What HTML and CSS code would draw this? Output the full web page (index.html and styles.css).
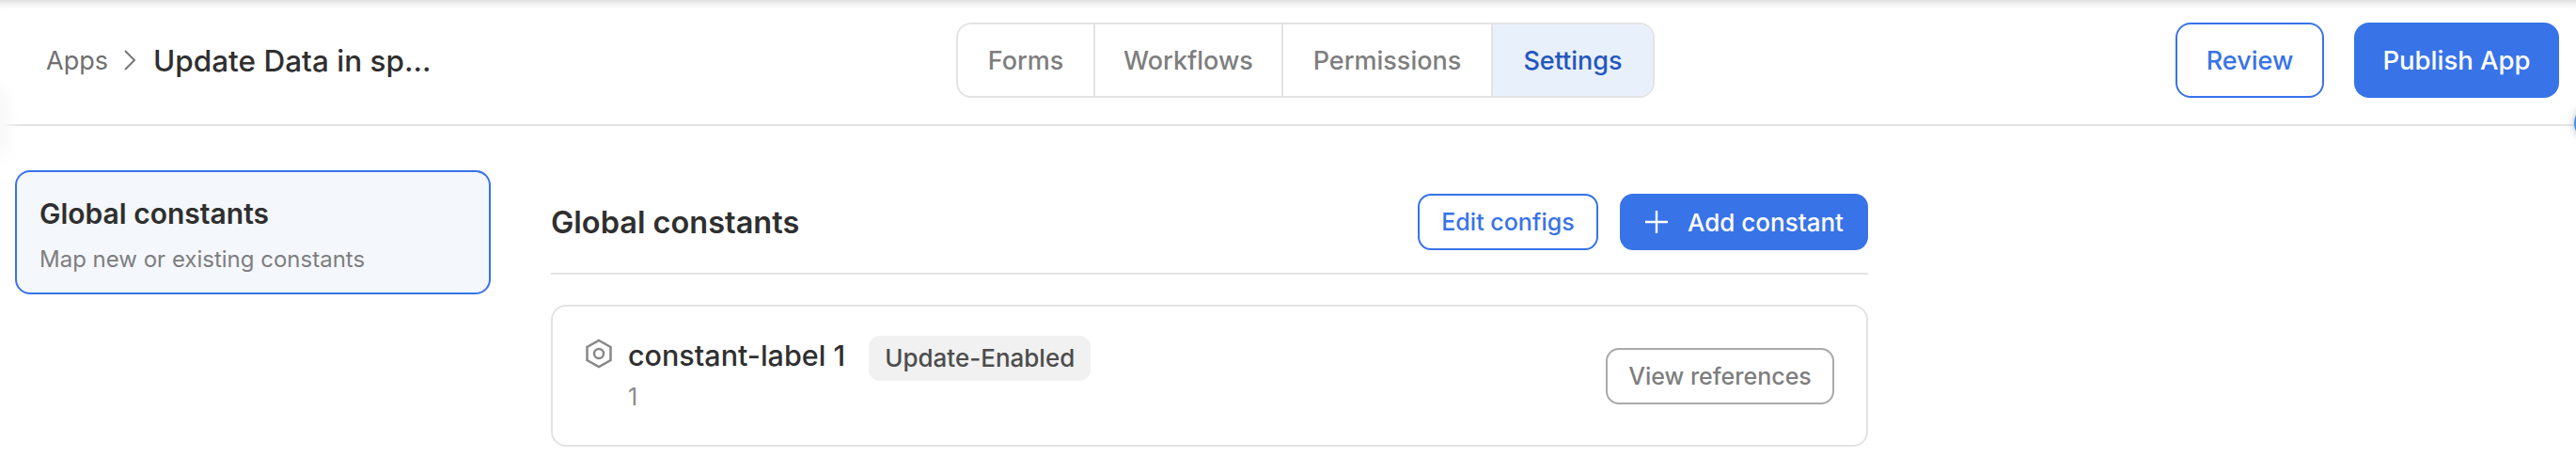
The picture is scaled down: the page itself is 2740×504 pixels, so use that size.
FILE: index.html
```html
<!DOCTYPE html>
<html lang="en">
<head>
    <meta charset="UTF-8">
    <meta name="viewport" content="width=device-width, initial-scale=1.0">
    <title>Settings</title>
    <link rel="stylesheet" href="styles.css">
</head>
<body>
    <header class="topbar">
        <span class="edge-shade"></span>
        <div class="crumbs">
            <span class="crumb-link">Apps</span>
            <svg class="crumb-sep" width="16" height="26" viewBox="0 0 16 26" fill="none"><path d="M3 3l10 10L3 23" stroke="#777" stroke-width="2"/></svg>
            <span class="crumb-title">Update Data in sp...</span>
        </div>
        <nav class="tabs">
            <a class="tab tab-forms">Forms</a>
            <a class="tab tab-workflows">Workflows</a>
            <a class="tab tab-permissions">Permissions</a>
            <a class="tab tab-settings active">Settings</a>
        </nav>
        <div class="actions">
            <button class="btn btn-outline btn-review">Review</button>
            <button class="btn btn-primary btn-publish">Publish App</button>
        </div>
        <span class="edge-dot"></span>
    </header>
    <main class="page">
        <aside class="side">
            <div class="side-item">
                <div class="side-title">Global constants</div>
                <div class="side-desc">Map new or existing constants</div>
            </div>
        </aside>
        <section class="content">
            <div class="content-head">
                <h2>Global constants</h2>
                <button class="btn btn-outline btn-small btn-edit">Edit configs</button>
                <button class="btn btn-primary btn-small btn-add">
                    <svg width="26" height="26" viewBox="0 0 26 26" fill="none"><path d="M13 1v24M1 13h24" stroke="#fff" stroke-width="2.4"/></svg>
                    Add constant
                </button>
            </div>
            <div class="constant">
                <svg class="constant-icon" width="30" height="32" viewBox="0 0 30 32" fill="none"><path d="M15 2l12.5 7v14L15 30 2.500 23V9z" stroke="#888" stroke-width="2.500"/><circle cx="15" cy="16" r="5" stroke="#888" stroke-width="2.500"/></svg>
                <div class="constant-text">
                    <div class="constant-name">
                        <span>constant-label 1</span>
                        <span class="tag">Update-Enabled</span>
                    </div>
                    <div class="constant-value">1</div>
                </div>
                <button class="btn btn-refs">View references</button>
            </div>
        </section>
    </main>
</body>
</html>
```

FILE: styles.css
```css
* { box-sizing: border-box; }
body { margin: 0; background: #fff; font-family: "Inter", "Open Sans", sans-serif; color: #2f2f2f; overflow: hidden; }

.topbar { position: relative; display: flex; align-items: center; height: 134px; padding: 24px 18px 28px 49px; border-bottom: 2px solid #e3e3e3; box-shadow: inset 0 10px 9px -8px #d2d2d2; }
.crumbs { display: flex; align-items: center; width: 968px; }
.crumb-link { font-size: 27px; color: #6f6f6f; }
.crumb-sep { margin: 0 17px 0 15px; }
.crumb-title { font-size: 31.500px; font-weight: 500; color: #2f2f2f; }

.tabs { display: flex; height: 80px; border: 2px solid #e3e3e3; border-radius: 16px; overflow: hidden; }
.tab { display: flex; align-items: center; justify-content: center; font-size: 27px; font-weight: 500; color: #7e7e7e; border-right: 2px solid #e3e3e3; }
.tab-forms { width: 146px; }
.tab-workflows { width: 200px; }
.tab-permissions { width: 223px; }
.tab-settings { width: 170px; border-right: none; }
.tab.active { background: #e8f0fb; color: #2456bd; }

.actions { display: flex; gap: 32px; margin-left: auto; }
.btn { display: flex; align-items: center; justify-content: center; font-family: inherit; font-weight: 500; cursor: pointer; }
.btn-outline { background: #fff; color: #3873e8; border: 2px solid #3873e8; }
.btn-primary { background: #3873e8; color: #fff; border: none; }
.btn-review { width: 158px; height: 80px; border-radius: 16px; font-size: 27px; }
.btn-publish { width: 218px; height: 80px; border-radius: 16px; font-size: 27.500px; }
.edge-dot { position: absolute; right: -36px; top: 112px; width: 38px; height: 38px; border-radius: 50%; background: #3f8fe8; box-shadow: 0 0 8px #bbb; }
.edge-shade { position: absolute; left: -20px; top: 90px; width: 32px; height: 80px; border-radius: 50%; background: #f9f9f9; filter: blur(6px); }

.page { display: flex; padding: 47px 0 0 16px; }
.side { width: 506px; margin-right: 64px; }
.side-item { height: 132px; padding: 26px 24px; background: #f4f7fc; border: 2px solid #3873e8; border-radius: 16px; }
.side-title { font-size: 30px; font-weight: 600; color: #2f2f2f; }
.side-desc { margin-top: 16px; font-size: 24px; color: #7e7e7e; }

.content { width: 1401px; padding-top: 25px; }
.content-head { display: flex; align-items: center; gap: 23px; padding-bottom: 24px; border-bottom: 2px solid #e3e3e3; }
.content-head h2 { margin: 0 auto 0 0; font-size: 32.500px; font-weight: 600; }
.btn-small { height: 60px; border-radius: 14px; font-size: 25px; }
.btn-edit { width: 192px; }
.btn-add { width: 264px; gap: 20px; font-size: 26px; }

.constant { display: flex; align-items: center; height: 151px; margin-top: 32px; padding: 0 34px 0 34px; border: 2px solid #e3e3e3; border-radius: 16px; }
.constant-icon { align-self: flex-start; margin-top: 34px; margin-right: 16px; }
.constant-text { flex: 1; align-self: flex-start; padding-top: 33px; }
.constant-name { display: flex; align-items: flex-start; gap: 25px; font-size: 30.500px; font-weight: 500; }
.tag { height: 48px; margin-top: -2px; padding: 8px 17px; background: #f1f1f1; border-radius: 12px; font-size: 26px; color: #4d4d4d; }
.constant-value { margin-top: 2px; font-size: 25px; color: #8a8a8a; }
.btn-refs { width: 243px; height: 60px; background: #fff; border: 2px solid #aaa; border-radius: 14px; font-size: 25px; color: #7e7e7e; }
```
